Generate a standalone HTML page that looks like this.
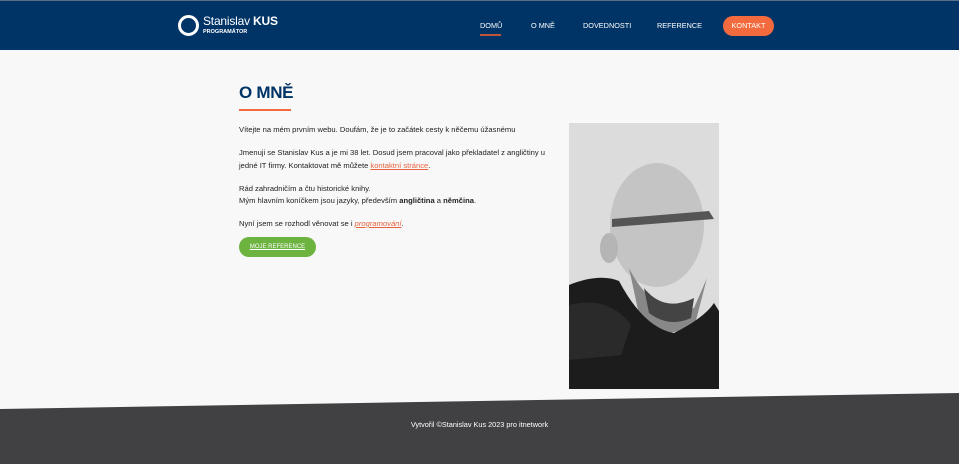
<!DOCTYPE html>
<html><head><meta charset="utf-8"><style>
*{margin:0;padding:0;box-sizing:border-box}
body{width:959px;height:464px;overflow:hidden;background:#f8f8f8;font-family:"Liberation Sans",sans-serif;position:relative}
.nav{position:absolute;left:0;top:0;width:959px;height:50px;background:#003366;border-top:1px solid #5a6f8a}
.logo{position:absolute;left:178px;top:14px;width:21px;height:21px;border:3px solid #fff;border-radius:50%}
.brand{position:absolute;left:203px;top:13px;color:#fff;font-size:12px;letter-spacing:-0.2px}
.brand b{font-weight:900}
.sub{position:absolute;left:203px;top:28px;color:#fff;font-size:5.5px;font-weight:bold}
.nl{position:absolute;top:20px;color:#fff;font-size:7.3px}
.act{position:absolute;left:480px;top:33px;width:21px;height:2px;background:#c0533a}
.kon{position:absolute;left:723px;top:15px;width:51px;height:20px;background:#f26a3d;border-radius:10px;color:#fff;font-size:7.3px;text-align:center;line-height:20px}
h1{position:absolute;left:239px;top:83px;font-size:17px;font-weight:900;color:#003366;letter-spacing:-0.3px}
.ul{position:absolute;left:239px;top:109px;width:52px;height:2px;background:#f26a3d}
.txt{position:absolute;left:239px;top:124px;width:318px;font-size:7.6px;line-height:12.5px;color:#222}
.txt p{margin-bottom:10.5px}
.txt a{color:#e5633e;text-decoration:underline}
.btn{position:absolute;left:239px;top:237px;width:77px;height:20px;background:#6db33f;border-radius:10px;color:#fff;font-size:6px;text-align:center;line-height:20px;text-decoration:underline}
.photo{position:absolute;left:569px;top:123px;width:150px;height:266px}
.foot{position:absolute;left:0;top:0;width:959px;height:464px}
.ft{position:absolute;top:420px;width:959px;text-align:center;color:#fff;font-size:7.3px}
</style></head><body>
<div class="nav">
<div class="logo"></div>
<div class="brand">Stanislav <b>KUS</b></div>
<div class="sub">PROGRAMÁTOR</div>
<div class="nl" style="left:480px">DOMŮ</div>
<div class="act"></div>
<div class="nl" style="left:531px">O MNĚ</div>
<div class="nl" style="left:583px">DOVEDNOSTI</div>
<div class="nl" style="left:657px">REFERENCE</div>
<div class="kon">KONTAKT</div>
</div>
<h1>O MNĚ</h1><div class="ul"></div>
<div class="txt">
<p>Vítejte na mém prvním webu. Doufám, že je to začátek cesty k něčemu úžasnému</p>
<p>Jmenuji se Stanislav Kus a je mi 38 let. Dosud jsem pracoval jako překladatel z angličtiny u jedné IT firmy. Kontaktovat mě můžete <a>kontaktní stránce</a>.</p>
<p>Rád zahradničím a čtu historické knihy.<br>Mým hlavním koníčkem jsou jazyky, především <b>angličtina</b> a <b>němčina</b>.</p>
<p>Nyní jsem se rozhodl věnovat se i <a><i>programování</i></a>.</p>
</div>
<div class="btn">MOJE REFERENCE</div>
<svg class="photo" viewBox="0 0 150 266">
<rect width="150" height="266" fill="#dcdcdc"/>
<ellipse cx="88" cy="102" rx="47" ry="62" fill="#c4c4c4"/>
<ellipse cx="40" cy="125" rx="9" ry="15" fill="#b5b5b5"/>
<path d="M60 145 Q85 195 125 185 L138 155 L125 205 L75 215Z" fill="#888"/>
<path d="M75 165 Q95 190 125 175 L122 195 Q100 205 80 190Z" fill="#444"/>
<path d="M43 96 L140 88 L145 96 L43 104Z" fill="#555"/>
<path d="M0 162 Q30 150 50 158 Q75 205 105 210 Q135 195 145 180 L150 188 L150 266 L0 266Z" fill="#1c1c1c"/>
<path d="M0 182 Q40 172 62 202 L52 232 L0 237Z" fill="#2a2a2a"/>
</svg>
<svg class="foot" viewBox="0 0 959 464"><polygon points="0,409 959,393 959,464 0,464" fill="#414143"/></svg>
<div class="ft">Vytvořil ©Stanislav Kus 2023 pro itnetwork</div>
</body></html>
